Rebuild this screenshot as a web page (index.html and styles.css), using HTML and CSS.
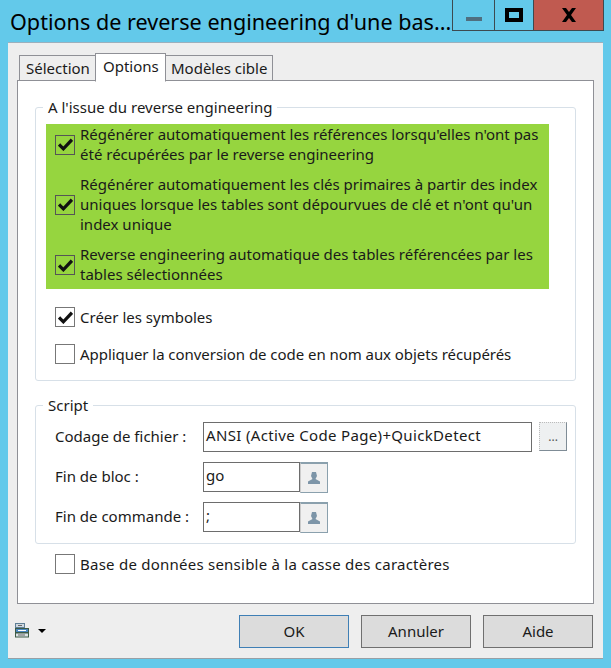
FILE: index.html
```html
<!DOCTYPE html>
<html lang="fr">
<head>
<meta charset="utf-8">
<title>Options de reverse engineering</title>
<link rel="stylesheet" href="styles.css">
</head>
<body>
<div class="window">
  <header class="titlebar">
    <div class="title">Options de reverse engineering d'une bas...</div>
    <div class="controls">
      <div class="ctl ctl-min"><span class="min-bar"></span></div>
      <div class="ctl ctl-max"><span class="max-box"></span></div>
      <div class="ctl ctl-close">
        <svg width="16" height="14" viewBox="0 0 16 14"><path d="M1 0H5L8 4L11 0H15L10 7L15 14H11L8 10L5 14H1L6 7Z" fill="#000"/></svg>
      </div>
    </div>
  </header>
  <main class="client">
    <nav class="tabs">
      <div class="tab tab-sel">Sélection</div>
      <div class="tab tab-active">Options</div>
      <div class="tab tab-mod">Modèles cible</div>
    </nav>
    <section class="panel">
      <fieldset class="group group-re">
        <legend>A l'issue du reverse engineering</legend>
        <div class="highlight">
          <div class="check check-a">
            <span class="box"><svg class="tick" viewBox="0 0 14 12"><path d="M1 6L5 10L13 1.5" fill="none" stroke="#111" stroke-width="3"/></svg></span>
            <span class="label label-up">Régénérer automatiquement les références lorsqu'elles n'ont pas<br>été récupérées par le reverse engineering</span>
          </div>
          <div class="check check-b">
            <span class="box"><svg class="tick" viewBox="0 0 14 12"><path d="M1 6L5 10L13 1.5" fill="none" stroke="#111" stroke-width="3"/></svg></span>
            <span class="label label-up">Régénérer automatiquement les clés primaires à partir des index<br>uniques lorsque les tables sont dépourvues de clé et n'ont qu'un<br>index unique</span>
          </div>
          <div class="check check-c">
            <span class="box"><svg class="tick" viewBox="0 0 14 12"><path d="M1 6L5 10L13 1.5" fill="none" stroke="#111" stroke-width="3"/></svg></span>
            <span class="label label-up">Reverse engineering automatique des tables référencées par les<br>tables sélectionnées</span>
          </div>
        </div>
        <div class="check check-d">
          <span class="box box-white"><svg class="tick" viewBox="0 0 14 12"><path d="M1 6L5 10L13 1.5" fill="none" stroke="#111" stroke-width="3"/></svg></span>
          <span class="label">Créer les symboles</span>
        </div>
        <div class="check check-e">
          <span class="box box-white"></span>
          <span class="label label-tight">Appliquer la conversion de code en nom aux objets récupérés</span>
        </div>
      </fieldset>
      <fieldset class="group group-script">
        <legend>Script</legend>
        <div class="row">
          <label class="field-label">Codage de fichier :</label>
          <div class="input input-wide">ANSI (Active Code Page)+QuickDetect</div>
          <div class="dots">...</div>
        </div>
        <div class="row">
          <label class="field-label">Fin de bloc :</label>
          <div class="input input-short">go</div>
          <div class="pick"><svg width="14" height="14" viewBox="0 0 14 14"><path d="M5 1H9L10 5L8.5 8L13 10.500V13H1V10.500L5.500 8L4 5Z" fill="#7d95a8"/></svg></div>
        </div>
        <div class="row">
          <label class="field-label">Fin de commande :</label>
          <div class="input input-short">;</div>
          <div class="pick"><svg width="14" height="14" viewBox="0 0 14 14"><path d="M5 1H9L10 5L8.5 8L13 10.500V13H1V10.500L5.500 8L4 5Z" fill="#7d95a8"/></svg></div>
        </div>
      </fieldset>
      <div class="check check-f">
        <span class="box box-white"></span>
        <span class="label label-loose">Base de données sensible à la casse des caractères</span>
      </div>
    </section>
    <footer class="footer">
      <div class="menu">
        <svg width="15" height="15" viewBox="0 0 15 15">
          <rect x="0.500" y="0.500" width="9" height="4" fill="#cfd8e0" stroke="#5f7f96"/>
          <rect x="0.500" y="5.500" width="13" height="4" fill="#4a86c0" stroke="#3c5a46"/>
          <rect x="0.500" y="10" width="13" height="4" fill="#dde3e6" stroke="#3c5a46"/>
          <path d="M3 2.500H7M3 12H10" stroke="#666"/>
          <path d="M3 7.500H11" stroke="#fff"/>
        </svg>
        <svg class="caret" width="8" height="4" viewBox="0 0 8 4"><path d="M0 0H8L4 4Z" fill="#000"/></svg>
      </div>
      <div class="btn btn-default">OK</div>
      <div class="btn">Annuler</div>
      <div class="btn">Aide</div>
    </footer>
  </main>
</div>
</body>
</html>
```
FILE: styles.css
```css
* { box-sizing: border-box; }
html, body { margin: 0; padding: 0; }
body {
  width: 611px;
  height: 668px;
  overflow: hidden;
  background: #63c9ea;
  font-family: "Noto Sans", "Open Sans", sans-serif;
  font-size: 15px;
  color: #1a1a1a;
}
.window { display: flex; flex-direction: column; height: 668px; }
.titlebar { display: flex; height: 42px; padding: 0 7px 0 10px; justify-content: space-between; }
.title { font-size: 21.6px; line-height: 27px; padding-top: 8px; color: #000; white-space: nowrap; }
.controls { flex: none; display: flex; height: 31px; border: 1px solid #3d4a50; border-top: 0; }
.ctl { display: flex; align-items: center; justify-content: center; height: 30px; }
.ctl-min { width: 42px; border-right: 1px solid #3d4a50; }
.ctl-max { width: 39px; border-right: 1px solid #3d4a50; }
.ctl-close { width: 69px; background: #c05a50; }
.min-bar { display: block; width: 16px; height: 4px; margin-top: 7px; background: #4f6f80; }
.max-box { display: block; width: 18px; height: 14px; border: 4px solid #000; }
.client {
  flex: none;
  height: 617px;
  margin: 0 8px;
  padding: 11px 9px 0;
  background: #eee;
  border-top: 1px solid #9bb0bd;
  border-bottom: 1px solid #98a0a6;
  display: flex;
  flex-direction: column;
}
.tabs { display: flex; height: 27px; padding-left: 2px; align-items: flex-end; position: relative; z-index: 1; margin-bottom: -1px; }
.tab {
  height: 26px;
  padding: 0 0 0 6px;
  line-height: 25px;
  background: #eee;
  border: 1px solid #8f9096;
  margin-right: -1px;
  white-space: nowrap;
}
.tab-sel { width: 77px; }
.tab-active { width: 71px; height: 29px; line-height: 24px; padding-left: 7px; background: #fff; border-bottom-color: #fff; z-index: 1; margin-bottom: -1px; }
.tab-mod { width: 108px; padding-left: 5px; }
.panel {
  flex: none;
  height: 524px;
  background: #fff;
  border: 1px solid #8f9096;
  padding: 17px 17px 0;
}
.group {
  margin: 0;
  padding: 0;
  border: 1px solid #d7e0e8;
  border-radius: 3px;
  min-width: 0;
}
.group legend { padding: 0 5px; line-height: 18px; }
.group-re { height: 283px; padding: 0 10px; }
.group-re legend { margin-left: -3px; }
.highlight { width: 503px; height: 165px; margin-top: 8px; background: #96d53f; display: flex; flex-direction: column; }
.check { display: flex; align-items: center; gap: 5px; line-height: 20px; padding-left: 9px; }
.label { white-space: nowrap; }
.label-up { padding-bottom: 2px; }
.label-tight { letter-spacing: -0.05px; }
.label-loose { letter-spacing: 0.24px; }
.check-a { height: 41px; }
.check-b { height: 79px; }
.check-c { height: 42px; }
.check-d { margin-top: 18px; height: 20px; }
.check-e { margin-top: 17px; height: 20px; }
.check-f { margin-top: 10px; padding-left: 20px; height: 20px; }
.box { flex: none; width: 20px; height: 20px; border: 1px solid #555; background: transparent; display: flex; align-items: center; justify-content: center; }
.box-white { background: #fff; border-color: #777; }
.tick { width: 15px; height: 13px; }
.group-script { height: 148px; margin-top: 15px; padding: 8px 8px 0 19px; }
.group-script legend { margin-left: -12px; }
.row { display: flex; align-items: flex-start; height: 40px; }
.field-label { width: 148px; flex: none; line-height: 28px; }
.input { height: 30px; border: 1px solid #6d6d6d; background: #fff; line-height: 24px; padding-left: 2px; }
.input-wide { width: 330px; letter-spacing: 0.34px; }
.input-short { width: 97px; }
.dots { width: 28px; height: 29px; margin-left: 7px; background: #eef0f1; border: 1px dotted #bbb; border-right: 1px solid #7f8c96; border-bottom: 1px solid #7f8c96; text-align: center; font-size: 12px; line-height: 28px; color: #555; }
.pick { width: 28px; height: 31px; display: flex; align-items: center; justify-content: center; background: #f0f0f0; border: 1px solid #8aa0ad; border-left-color: #ccc; border-top-width: 2px; }
.footer { display: flex; align-items: flex-start; padding-top: 11px; gap: 12px; }
.menu { width: 222px; margin: 0 -10px 0 -2px; display: flex; align-items: center; gap: 8px; height: 30px; }
.caret { margin-top: 1px; }
.btn { width: 110px; height: 33px; background: #dcdcdc; border: 1px solid #707070; text-align: center; line-height: 30px; }
.btn-default { border-color: #3f7fb5; }
```
